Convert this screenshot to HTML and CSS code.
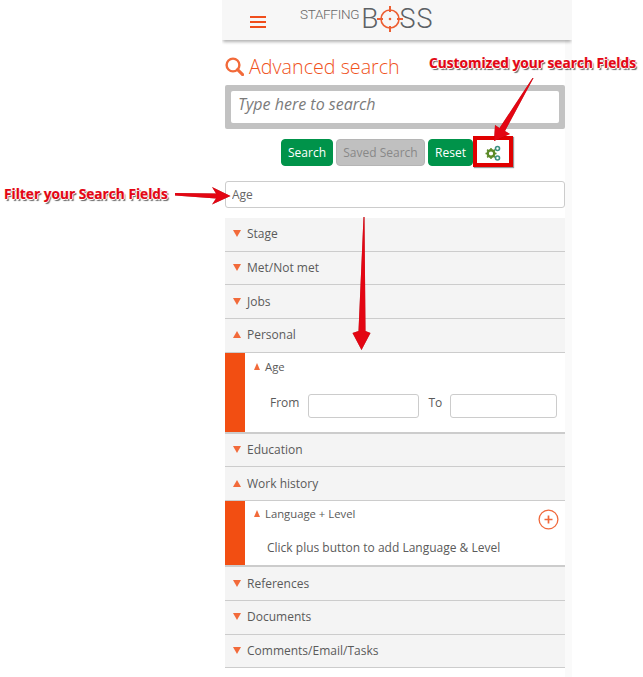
FILE: index.html
```html
<!DOCTYPE html>
<html lang="en">
<head>
<meta charset="utf-8">
<title>Advanced search</title>
<link rel="stylesheet" href="styles.css">
</head>
<body>
<div class="panel">
  <header class="topbar">
    <svg class="burger" width="16" height="12" viewBox="0 0 16 12"><path d="M0 1h16M0 6h16M0 11h16" stroke="#f04e1c" stroke-width="2"/></svg>
    <div class="logo">
      <span class="logo-small">STAFFING</span><span class="logo-big"><span class="logo-b">B</span><svg class="logo-o" width="28" height="28" viewBox="0 0 28 28"><circle cx="14" cy="14" r="9" fill="none" stroke="#ec5f33" stroke-width="1.600"/><circle cx="14" cy="14" r="1.300" fill="#ec5f33"/><path d="M14 1v6M14 21v6M1 14h6M21 14h6" stroke="#ec5f33" stroke-width="2"/></svg>SS</span>
    </div>
  </header>
  <main class="content">
    <h1 class="title">
      <svg class="title-icon" width="19" height="19" viewBox="0 0 19 19"><circle cx="8" cy="8" r="6.400" fill="none" stroke="#f26a3a" stroke-width="2.400"/><path d="M12.600 12.600l5 5" stroke="#f26a3a" stroke-width="3" stroke-linecap="round"/></svg>
      Advanced search
    </h1>
    <div class="search-box"><input class="search-input" type="text" placeholder="Type here to search"></div>
    <div class="actions">
      <button class="btn btn-green">Search</button>
      <button class="btn btn-grey">Saved Search</button>
      <button class="btn btn-green btn-reset">Reset</button>
      <button class="gear-btn">
        <svg width="16" height="16" viewBox="0 0 16 16"><circle cx="6" cy="8.500" r="3.300" fill="none" stroke="#5c8a28" stroke-width="2.400"/><path d="M6 3v11M.500 8.500h11M2.100 4.600l7.800 7.800M9.900 4.600l-7.800 7.800" stroke="#5c8a28" stroke-width="1.500" stroke-dasharray="1.500 8 1.500"/><circle cx="6" cy="8.500" r="1.500" fill="#fff"/><circle cx="12.500" cy="3.500" r="2" fill="none" stroke="#3a9080" stroke-width="1.600"/><circle cx="12.500" cy="13" r="2" fill="none" stroke="#3a9080" stroke-width="1.600"/></svg>
      </button>
    </div>
    <input class="filter" type="text" value="Age">
    <section class="accordion">
      <div class="row"><span class="caret down"></span>Stage</div>
      <div class="row"><span class="caret down"></span>Met/Not met</div>
      <div class="row"><span class="caret down"></span>Jobs</div>
      <div class="row"><span class="caret up"></span>Personal</div>
      <div class="sub sub-age">
        <div class="sub-head"><span class="caret up small"></span>Age</div>
        <div class="range">
          <label class="range-label">From</label><input class="range-input" type="text">
          <label class="range-label to">To</label><input class="range-input" type="text">
        </div>
      </div>
      <div class="row"><span class="caret down"></span>Education</div>
      <div class="row"><span class="caret up"></span>Work history</div>
      <div class="sub sub-lang">
        <div class="sub-head"><span class="caret up small"></span>Language + Level</div>
        <svg class="plus" width="21" height="21" viewBox="0 0 21 21"><circle cx="10.500" cy="10.500" r="9.400" fill="#fff" stroke="#f0693c" stroke-width="1.300"/><path d="M10.500 6.500v8M6.500 10.500h8" stroke="#f0693c" stroke-width="1.700"/></svg>
        <p class="hint">Click plus button to add Language &amp; Level</p>
      </div>
      <div class="row"><span class="caret down"></span>References</div>
      <div class="row"><span class="caret down"></span>Documents</div>
      <div class="row"><span class="caret down"></span>Comments/Email/Tasks</div>
    </section>
  </main>
</div>
<span class="note note-custom">Customized your search Fields</span>
<span class="note note-filter">Filter your Search Fields</span>
<div class="gear-frame"></div>
<svg class="arrows" width="643" height="677" viewBox="0 0 643 677">
  <path d="M533.500 78 L505 131 L510 134 L494 141 L495 125 L499.500 128 L532.500 78 Z" fill="#e30613"/>
  <path d="M175 193 L216 193.500 L212 187 L230.500 196 L212 204.500 L216 198.500 L175 195.500 Z" fill="#e30613"/>
  <path d="M363.500 217 L364.500 217 L365.500 331 L370.500 333 L361.500 350 L352.500 333 L358.500 331 Z" fill="#e30613"/>
</svg>
</body>
</html>
```
FILE: styles.css
```css
* { box-sizing: border-box; }
html, body { margin: 0; padding: 0; }
body {
  width: 643px;
  height: 677px;
  overflow: hidden;
  background: #fff;
  font-family: "Open Sans", sans-serif;
  color: #555;
  position: relative;
}
.panel {
  width: 350px;
  height: 677px;
  margin-left: 222px;
  overflow: hidden;
  background: linear-gradient(to right, #fff 343px, #fafafa 343px);
}
.topbar {
  height: 40px;
  background: #f7f7f7;
  box-shadow: 0 3px 3px -1px rgba(0,0,0,.3);
  display: flex;
  align-items: center;
}
.burger { margin-left: 28px; margin-top: 3px; }
.logo {
  display: flex;
  align-items: flex-start;
  margin-left: 34px;
  margin-top: -2px;
  color: #5c6165;
  font-family: "Roboto", sans-serif;
  font-weight: 300;
}
.logo-small { font-size: 13.500px; letter-spacing: -.3px; color: #666; line-height: 18px; }
.logo-big { font-size: 27px; line-height: 28px; letter-spacing: 1px; display: flex; align-items: center; margin-left: 2px; }
.logo-b { margin-right: -1px; font-size: 28px; }
.logo-o { margin: 0 -5px 0 -2px; }
.content { width: 340px; margin-left: 3px; }
.title {
  margin: 13px 0 0;
  height: 27px;
  display: flex;
  align-items: center;
  gap: 5px;
  font-size: 19.700px;
  font-weight: 300;
  line-height: 27px;
  color: #f0531c;
}
.search-box {
  margin-top: 5px;
  height: 44px;
  background: #c2c2c2;
  border-radius: 2px;
  padding: 6px 6px;
}
.search-input {
  width: 100%;
  height: 32px;
  border: 0;
  border-radius: 2px;
  background: #fff;
  padding: 0 7px 6px;
  font: italic 16px "Open Sans", sans-serif;
}
.search-input::placeholder { color: #7b7b7b; opacity: 1; }
.actions {
  display: flex;
  justify-content: flex-start;
  margin: 10px 0 0 56px;
  height: 27px;
}
.btn {
  height: 27px;
  border-radius: 4px;
  font: 12px "Open Sans", sans-serif;
  padding: 0;
}
.btn-green { background: #00934a; border: 1px solid #00934a; color: #fff; width: 52px; }
.btn-grey { background: #c0c0c0; border: 1px solid #b5b5b5; color: #888; width: 89px; margin: 0 3px; }
.btn-reset { width: 45px; }
.gear-btn {
  width: 39px;
  height: 27px;
  padding: 0;
  background: transparent;
  border: 0;
  display: flex;
  align-items: center;
  justify-content: center;
}
.filter {
  display: block;
  width: 100%;
  height: 27px;
  margin-top: 15px;
  border: 1px solid #ccc;
  border-radius: 3px;
  padding: 0 6px;
  background: #fff;
  color: #666;
  font: 12px "Open Sans", sans-serif;
}
.accordion { margin-top: 10px; }
.row {
  height: 33.670px;
  background: #f4f4f4;
  border-bottom: 1px solid #ccc;
  display: flex;
  align-items: center;
  font-size: 12px;
  color: #5a5a5a;
  padding: 0 0 1px 8px;
}
.caret {
  width: 0;
  height: 0;
  margin-right: 6px;
  border-left: 4px solid transparent;
  border-right: 4px solid transparent;
}
.caret.down { border-top: 7px solid #f26a3a; }
.caret.up { border-bottom: 7px solid #f26a3a; }
.caret.small { border-left-width: 3.500px; border-right-width: 3.500px; margin-right: 5px; }
.sub {
  position: relative;
  background: linear-gradient(to right, #f24e12 20px, #fff 20px);
  padding-left: 20px;
  border-bottom: 2px solid #ccc;
}
.sub-age { height: 81px; }
.sub-lang { height: 66.500px; }
.sub-head {
  display: flex;
  align-items: center;
  padding-left: 9px;
  height: 28px;
  font-size: 11.300px;
  color: #5a5a5a;
}
.sub-lang .sub-head { height: 25px; }
.range {
  display: flex;
  align-items: center;
  margin-top: 13px;
  padding-left: 25px;
}
.range-label { font-size: 12px; margin-right: 9px; position: relative; top: -3px; color: #5a5a5a; }
.range-label.to { margin-left: 9px; margin-right: 8px; }
.range-input {
  height: 24px;
  width: 111px;
  border: 1px solid #ccc;
  border-radius: 3px;
  background: #fff;
}
.range-input:last-child { width: 107px; }
.plus { position: absolute; right: 6px; top: 8px; }
.hint { margin: 12px 0 0 22px; font-size: 12px; line-height: 20px; color: #5a5a5a; }
.note {
  position: absolute;
  font-family: "Open Sans", sans-serif;
  font-size: 13.700px;
  font-weight: 700;
  white-space: nowrap;
  color: #e30613;
  -webkit-text-stroke: .2px #e30613;
  text-shadow: 1px 0 0 #fff, -1px 0 0 #fff, 0 1px 0 #fff, 0 -1px 0 #fff, 1.500px 1.500px 1px #666;
}
.note-custom { left: 429px; top: 53px; }
.note-filter { left: 4px; top: 184px; }
.gear-frame {
  position: absolute;
  left: 473px;
  top: 136px;
  width: 40px;
  height: 31px;
  border: 4px solid #e00000;
  box-shadow: 1px 1px 1px #999;
}
.arrows { position: absolute; left: 0; top: 0; pointer-events: none; filter: drop-shadow(.5px .5px .5px rgba(90,0,0,.5)); }
```
